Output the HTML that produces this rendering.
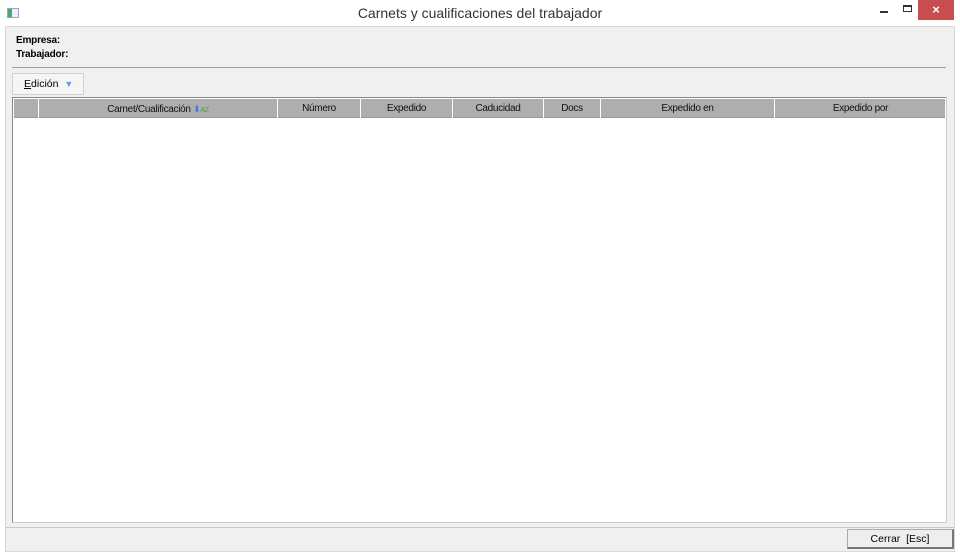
<!DOCTYPE html>
<html><head><meta charset="utf-8"><style>
*{margin:0;padding:0;box-sizing:border-box}
body{width:960px;height:554px;background:#fff;font-family:"Liberation Sans",sans-serif;font-size:11px;color:#000;position:relative;overflow:hidden}
.a{position:absolute}
.title{left:0;top:0;width:960px;height:26px;text-align:center;font-size:14px;line-height:26px;color:#333}
.frame{left:5px;top:26px;width:950px;height:526px;background:#f0f0f0;border:1px solid #d8d8d8}
.hdr{background:#aeaeae;height:19px;border-bottom:1px solid #999}
.col{position:absolute;top:0;height:19px;border-left:1px solid #fff;text-align:center;line-height:20px;font-size:10px;letter-spacing:-0.3px;color:#111}
</style></head><body>
<div class="a title">Carnets y cualificaciones del trabajador</div>
<div class="a" style="left:7px;top:8px;width:12px;height:10px;border:1px solid #9ab;background:#eef"><div style="width:4px;height:8px;background:#4a7"></div></div>
<div class="a" style="left:880px;top:11px;width:8px;height:2px;background:#333"></div>
<div class="a" style="left:903px;top:5px;width:9px;height:7px;border:1px solid #333;border-top-width:2px"></div>
<div class="a" style="left:918px;top:0;width:36px;height:20px;background:#c74e4e;color:#fff;text-align:center;line-height:19px;font-size:13px;font-weight:bold">×</div>
<div class="a frame"></div>
<div class="a" style="left:16px;top:34px;font-weight:bold;line-height:14px;font-size:10px;letter-spacing:-0.2px">Empresa:<br>Trabajador:</div>
<div class="a" style="left:12px;top:67px;width:934px;height:1px;background:#a0a0a0"></div>
<div class="a" style="left:12px;top:73px;width:72px;height:22px;background:#f5f5f5;border:1px solid #d0d0d0;line-height:21px;padding-left:11px;font-size:10.5px"><u>E</u>dición <span style="color:#6a9ae0;font-size:9px;margin-left:3px">▼</span></div>
<div class="a" style="left:12px;top:97px;width:935px;height:426px;background:#fff;border:1px solid #888;border-right-color:#ccc;border-bottom-color:#ccc">
 <div style="margin:1px;position:relative" class="hdr">
  <div class="col" style="left:24px;width:239px">Carnet/Cualificación <span style="color:#3a7ae0;font-size:9px">⬇</span><span style="color:#3a3;font-size:7px">AZ</span></div>
  <div class="col" style="left:263px;width:83px">Número</div>
  <div class="col" style="left:346px;width:92px">Expedido</div>
  <div class="col" style="left:438px;width:91px">Caducidad</div>
  <div class="col" style="left:529px;width:57px">Docs</div>
  <div class="col" style="left:586px;width:174px">Expedido en</div>
  <div class="col" style="left:760px;width:172px">Expedido por</div>
 </div>
</div>
<div class="a" style="left:6px;top:527px;width:948px;height:1px;background:#c8c8c8"></div>
<div class="a" style="left:847px;top:529px;width:107px;height:20px;background:#eee;border:1px solid #aaa;border-right:2px solid #777;border-bottom:2px solid #777;text-align:center;line-height:19px;font-size:10.5px">Cerrar &nbsp;[Esc]</div>
</body></html>
